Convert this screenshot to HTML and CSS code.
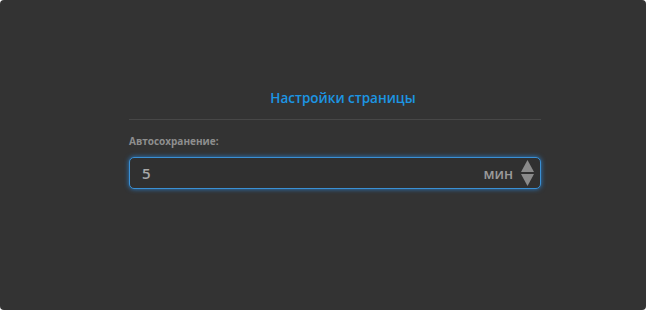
FILE: index.html
```html
<!DOCTYPE html>
<html lang="ru">
<head>
    <meta charset="UTF-8">
    <title>Настройки страницы</title>
    <link rel="stylesheet" href="styles.css">
</head>
<body>
    <section class="panel">
        <div class="settings">
            <h1 class="settings__title">Настройки страницы</h1>
            <label class="settings__label" for="autosave">Автосохранение:</label>
            <div class="field">
                <input class="field__input" type="text" id="autosave" value="5">
                <span class="field__unit">мин</span>
                <span class="field__spin">
                    <svg width="13" height="26" viewBox="0 0 13 26">
                        <path d="M6.5 0 L13 12 L0 12 Z" fill="#8a8a8a"/>
                        <path d="M0 14 L13 14 L6.5 26 Z" fill="#8a8a8a"/>
                    </svg>
                </span>
            </div>
        </div>
    </section>
</body>
</html>
```

FILE: styles.css
```css
*{
    box-sizing: border-box;
    padding: 0;margin: 0;
}
body{
    background: #fff;
    font-family: "Open Sans", "DejaVu Sans", sans-serif;
}
.panel{
    height: 310px;
    background: #333;
    border-radius: 4px;
    padding-top: 87px;
}
.settings{
    width: 412px;
    margin-left: 129px;
}
.settings__title{
    font-size: 13.5px;
    font-weight: 600;
    color: #1c96e3;
    text-align: center;
    padding-left: 16px;
    padding-bottom: 10px;
    border-bottom: 1px solid #474747;
    line-height: 22px;
}
.settings__label{
    display: block;
    margin-top: 14px;
    font-size: 10px;
    font-weight: 700;
    color: #8e8e8e;
    line-height: 14px;
}
.field{
    display: flex;
    align-items: center;
    height: 32px;
    margin-top: 9px;
    padding: 0 6px 0 12px;
    border: 1px solid #3a90d4;
    border-radius: 5px;
    background: #303030;
    box-shadow: 0 0 5px rgba(40, 140, 230, 0.85);
}
.field__input{
    flex: 1;
    min-width: 0;
    background: none;
    border: none;
    outline: none;
    font-family: inherit;
    font-size: 15px;
    font-weight: 600;
    color: #a8a8a8;
}
.field__unit{
    font-size: 14px;
    font-weight: 600;
    color: #9a9a9a;
    margin-right: 8px;
}
.field__spin{
    display: flex;
}
```
